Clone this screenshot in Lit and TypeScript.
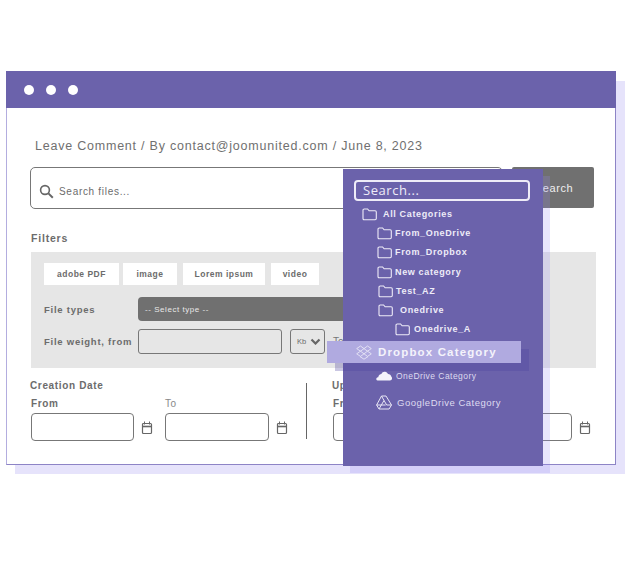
import { LitElement, html, css, svg } from "lit";
import { customElement } from "lit/decorators.js";

const folder = svg`<path d="M1 3.2c0-.8.5-1.2 1.2-1.2h3.4l1.5 1.8h6c.8 0 1.2.5 1.2 1.2v6.6c0 .8-.5 1.2-1.2 1.2H2.2c-.7 0-1.2-.4-1.2-1.2z" fill="none" stroke="currentColor" stroke-width="1.1"/>`;
const cal = html`<svg class="cal" width="12" height="14" viewBox="0 0 12 14"><path d="M3.500 .5v3M8.500 .5v3" stroke="#666" stroke-width="1"/><rect x="1.500" y="2.500" width="9" height="10" rx="1" fill="none" stroke="#666" stroke-width="1.200"/><path d="M1.500 5.500h9" stroke="#666" stroke-width="1.600"/></svg>`;

@customElement("app-root")
export class AppRoot extends LitElement {
  static styles = css`
    :host { display: block; height: 585px; font-family: "Liberation Sans", Arial, sans-serif; color: #666; }
    .stage { position: relative; width: 630px; height: 585px; overflow: hidden; background: #fff; padding: 71px 0 0 6px; box-sizing: border-box; }
    .backdrop { position: absolute; left: 15px; top: 81px; width: 610px; height: 393px; background: #e6e3fb; }
    .window { position: relative; width: 610px; height: 394px; box-sizing: border-box; background: #fff; border: 1px solid #8d84c6; border-left-color: #b3addf; display: flex; flex-direction: column; }
    .bar { height: 36px; background: #6b62ab; margin: -1px -1px 0; display: flex; align-items: center; gap: 12px; padding: 1px 0 0 18px; box-sizing: content-box; flex: none; }
    .dot { width: 10px; height: 10px; border-radius: 50%; background: #fff; }
    .body { padding: 0 20px 0 24px; display: flex; flex-direction: column; }
    .crumb { margin: 29px 0 0 4px; font-size: 12.500px; line-height: 18px; letter-spacing: .78px; color: #707070; white-space: nowrap; }
    .searchrow { display: flex; gap: 9px; margin: 12px 0 0 -1px; }
    .search { width: 473px; height: 42px; box-sizing: border-box; border: 1px solid #777; border-radius: 5px; display: flex; align-items: center; gap: 5px; padding: 6px 0 0 8px; font-size: 10px; letter-spacing: .7px; color: #6c6c6c; }
    .go { width: 82px; height: 41px; background: #707070; border-radius: 2px; color: #eee; font-size: 11px; letter-spacing: .6px; display: flex; align-items: center; justify-content: center; padding-left: 2px; box-sizing: border-box; }
    .filters-title { margin: 23px 0 0 0; font-size: 10.500px; line-height: 13px; font-weight: 700; letter-spacing: .8px; color: #6c6c6c; }
    .panel { margin: 7px 0 0 0; width: 565px; height: 116px; box-sizing: border-box; background: #e6e6e6; padding: 11px 0 0 13px; }
    .tags { display: flex; height: 22px; }
    .tag { background: #fff; height: 22px; display: flex; align-items: center; justify-content: center; font-size: 8.500px; font-weight: 700; letter-spacing: .5px; color: #6c6c6c; }
    .t1 { width: 75px; margin-right: 4px; } .t2 { width: 54px; margin-right: 6px; } .t3 { width: 82px; margin-right: 6px; } .t4 { width: 48px; }
    .line { display: flex; align-items: center; }
    .l1 { margin-top: 12px; height: 24px; }
    .l2 { margin-top: 8px; height: 25px; }
    .lab { width: 94px; flex: none; font-size: 9.500px; font-weight: 700; letter-spacing: .75px; color: #6c6c6c; white-space: nowrap; }
    .select { width: 400px; height: 24px; background: #707070; border-radius: 4px; color: #e8e8e8; font-size: 8px; letter-spacing: .55px; display: flex; align-items: center; padding-left: 7px; box-sizing: border-box; }
    .inp { box-sizing: border-box; border: 1px solid #777; border-radius: 3px; height: 25px; background: transparent; }
    .w1 { width: 144px; }
    .kb { width: 35px; margin-left: 8px; display: flex; align-items: center; gap: 4px; padding-left: 6px; font-size: 7.500px; color: #6c6c6c; }
    .to2 { margin-left: 8px; font-size: 10px; color: #777; }
    .dates { display: flex; margin-top: 11px; }
    .dcol { display: flex; flex-direction: column; }
    .dhead { font-size: 10px; line-height: 13px; font-weight: 700; letter-spacing: .65px; color: #6c6c6c; white-space: nowrap; margin-left: -1px; }
    .drow { display: flex; margin-top: 5px; }
    .f { width: 134px; flex: none; }
    .fl { font-size: 10px; line-height: 13px; letter-spacing: .6px; font-weight: 700; color: #6c6c6c; }
    .fl.light { font-weight: 400; color: #888; }
    .dinput { height: 28px; border: 1px solid #777; border-radius: 4px; box-sizing: border-box; margin-top: 3px; flex: none; }
    .wa { width: 103px; } .wb { width: 104px; } .wc { width: 239px; }
    .dline { display: flex; align-items: center; gap: 7px; }
    .cal { flex: none; margin-top: 4px; }
    .divider { width: 1px; height: 56px; background: #666; margin: 4px 26px 0 7px; flex: none; }
    .dd { position: absolute; left: 343px; top: 169px; width: 200px; height: 297px; background: #6b62ab; box-shadow: 7px 7px 0 rgba(150,135,240,.22); color: #eeecf8; display: flex; flex-direction: column; padding: 11px 0 0 0; box-sizing: border-box; }
    .ddsearch { margin-left: 11px; width: 176px; height: 21px; box-sizing: border-box; border: 2px solid #eeecf8; border-radius: 4px; font-size: 13px; letter-spacing: .55px; line-height: 17px; padding-left: 7px; font-family: "Open Sans", sans-serif; }
    .item { display: flex; align-items: center; height: 19.300px; font-size: 9px; font-weight: 700; letter-spacing: .65px; white-space: nowrap; }
    .item svg { flex: none; }
    .i0 { margin-top: 3px; padding-left: 19px; gap: 6px; }
    .i1 { padding-left: 34px; gap: 3px; }
    .i2 { padding-left: 35px; gap: 3px; }
    .i3 { padding-left: 35px; gap: 7px; }
    .i4 { padding-left: 52px; gap: 4px; }
    .hl { margin: 2px 22px 0 -16px; height: 22px; background: #b0aae0; box-shadow: 8px 8px 0 rgba(75,65,160,.3); padding-left: 29px; gap: 6px; font-size: 11.500px; letter-spacing: 1.150px; color: #f4f3fb; }
    .od { margin-top: 2px; height: 22px; padding-left: 33px; gap: 4px; font-weight: 400; font-size: 8.500px; letter-spacing: .45px; color: #dedbf0; }
    .gd { margin-top: 1px; height: 28px; padding-left: 33px; gap: 5px; font-weight: 400; font-size: 9.500px; letter-spacing: .5px; color: #dedbf0; }
  `;

  private fold() { return html`<svg width="15" height="14" viewBox="0 0 15 14">${folder}</svg>`; }

  render() {
    return html`<div class="stage">
      <div class="backdrop"></div>
      <div class="window">
        <div class="bar"><span class="dot"></span><span class="dot"></span><span class="dot"></span></div>
        <div class="body">
          <div class="crumb">Leave Comment / By contact@joomunited.com / June 8, 2023</div>
          <div class="searchrow">
            <div class="search"><svg width="15" height="15" viewBox="0 0 15 15"><circle cx="6" cy="6" r="4.400" fill="none" stroke="#666" stroke-width="1.600"/><path d="M9.400 9.400l4.400 4.400" stroke="#666" stroke-width="2"/></svg>Search files...</div>
            <div class="go">Search</div>
          </div>
          <div class="filters-title">Filters</div>
          <div class="panel">
            <div class="tags"><span class="tag t1">adobe PDF</span><span class="tag t2">image</span><span class="tag t3">Lorem ipsum</span><span class="tag t4">video</span></div>
            <div class="line l1"><span class="lab">File types</span><div class="select">-- Select type --</div></div>
            <div class="line l2"><span class="lab">File weight, from</span><div class="inp w1"></div>
              <div class="inp kb">Kb<svg width="11" height="7" viewBox="0 0 11 7"><path d="M1.500 1.500l4 4 4-4" fill="none" stroke="#666" stroke-width="2.200"/></svg></div>
              <span class="to2">To</span></div>
          </div>
          <div class="dates">
            <div class="dcol">
              <div class="dhead">Creation Date</div>
              <div class="drow">
                <div class="f"><div class="fl">From</div><div class="dline"><div class="dinput wa"></div>${cal}</div></div>
                <div class="f"><div class="fl light">To</div><div class="dline"><div class="dinput wb"></div>${cal}</div></div>
              </div>
            </div>
            <div class="divider"></div>
            <div class="dcol">
              <div class="dhead">Updated Date</div>
              <div class="drow">
                <div><div class="fl">From</div><div class="dline"><div class="dinput wc"></div>${cal}</div></div>
              </div>
            </div>
          </div>
        </div>
      </div>
      <div class="dd">
        <div class="ddsearch">Search...</div>
        <div class="item i0">${this.fold()}All Categories</div>
        <div class="item i1">${this.fold()}From_OneDrive</div>
        <div class="item i1">${this.fold()}From_Dropbox</div>
        <div class="item i1">${this.fold()}New category</div>
        <div class="item i2">${this.fold()}Test_AZ</div>
        <div class="item i3">${this.fold()}Onedrive</div>
        <div class="item i4">${this.fold()}Onedrive_A</div>
        <div class="item hl"><svg width="16" height="15" viewBox="0 0 16 15" fill="none" stroke="#eeecf8" stroke-width=".8"><path d="M4.500 1L.7 3.600l3.800 2.600L8 3.600zM11.500 1L8 3.600l3.500 2.600 3.800-2.600zM4.500 6.200L.7 8.800l3.800 2.600L8 8.800zM11.500 6.200L8 8.800l3.500 2.600 3.800-2.600zM4 11.600l4 2.600 4-2.600"/></svg>Dropbox Category</div>
        <div class="item od"><svg width="16" height="10" viewBox="0 0 16 10"><path d="M1.500 9.500C.3 9.200 0 7.800.6 7c.4-.6 1-.8 1.600-.7C2.600 4 4.300 3 5.400 3 6 1.300 7.600.5 9 .7c1.400.1 2.500 1 3 2.300 1.800.1 3 1 3.500 3 .5.400.7 1 .5 1.800-.2 1-1 1.700-2 1.700z" fill="#f4f3fb"/></svg>OneDrive Category</div>
        <div class="item gd"><svg width="16" height="15" viewBox="0 0 16 15" fill="none" stroke="#e8e6f5" stroke-width="1"><path d="M5.500 1h4.500l5.500 9-2.400 4H3L.6 10z"/><path d="M5.500 1l2.500 4.500M8 5.500L3 14M.6 10h9M8 5.500l2.700 4.500h4.800"/></svg>GoogleDrive Category</div>
      </div>
    </div>`;
  }
}
